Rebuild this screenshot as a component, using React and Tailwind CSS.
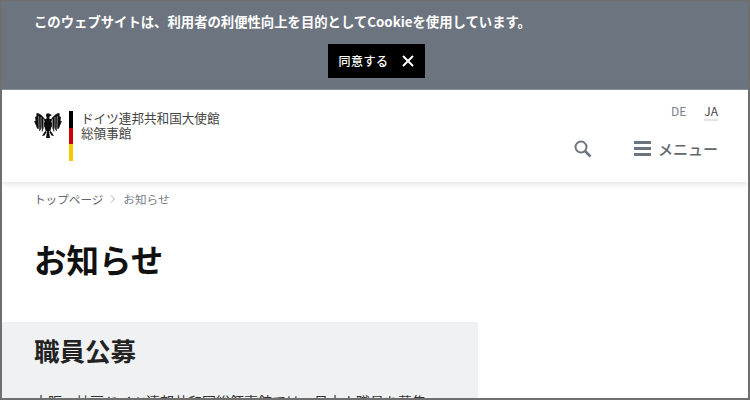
const jp = { fontFamily: '"Noto Sans CJK JP", "Noto Sans", sans-serif' };

function Eagle() {
  const feathersL = [
    "M11 9 C8 4 5 2.5 2.8 2.5 L3.4 15",
    "M10.5 10 C8 6 4 5 1.4 6 L3.4 17",
    "M10.5 12 C7 9 3 9 0.6 10.5 L4 18",
    "M10.5 13 L6 7 L5.6 20",
    "M11 14 L8.5 7 L8.2 20.5",
  ];
  return (
    <svg width="28" height="28" viewBox="0 0 28 28" fill="#0c0c0c">
      <circle cx="14" cy="4.2" r="2" />
      <path d="M15.3 2.8 L18 4 L15.4 5.4Z" />
      <path d="M12.8 5 H15.2 L15.6 8 H12.4Z" />
      <path d="M11 8 H17 L17.8 15 L16.2 20 H11.8 L10.2 15Z" />
      <g stroke="#0c0c0c" strokeWidth="0.7">
        {feathersL.map((d) => (
          <path key={d} d={d} />
        ))}
        <g transform="translate(28 0) scale(-1 1)">
          {feathersL.map((d) => (
            <path key={d} d={d} />
          ))}
        </g>
      </g>
      <path d="M4.6 5 L5 17 M7 6 L7.2 18 M9.4 8 L9.6 17 M23.4 5 L23 17 M21 6 L20.8 18 M18.6 8 L18.4 17" stroke="#fff" strokeWidth="0.5" fill="none" />
      <path d="M13 20 H15 L16 27 H12Z" />
      <path d="M11.5 19.5 L8 25 L10.5 24.5 L12.5 21Z" />
      <path d="M16.5 19.5 L20 25 L17.5 24.5 L15.5 21Z" />
    </svg>
  );
}

export default function App() {
  return (
    <div style={jp} className="w-[750px] h-[400px] overflow-hidden bg-white border-x-2 border-b-2 border-t border-[#6f6f6f] box-border">
      <div className="h-[89px] bg-[#6c757f] border-b border-[#8b929a] flex flex-col items-center">
        <p className="w-full pl-[32px] mt-[12px] text-[13.35px] leading-[18px] font-bold text-white whitespace-nowrap">このウェブサイトは、利用者の利便性向上を目的としてCookieを使用しています。</p>
        <div className="mt-[13px] pl-[2px]">
          <button style={jp} className="h-[34px] w-[97px] bg-black text-white text-[12px] font-medium flex items-center justify-center gap-[13px] tracking-[0.5px]">
            同意する
            <svg width="12" height="12" viewBox="0 0 12 12" stroke="#fff" strokeWidth="2" fill="none"><path d="M1 1 L11 11 M11 1 L1 11" /></svg>
          </button>
        </div>
      </div>

      <header className="h-[92px] flex justify-between pl-[32px] pr-[30px] shadow-[0_2px_6px_rgba(0,0,0,0.12)]">
        <div className="flex items-start pt-[21px]">
          <Eagle />
          <div className="ml-[7px] w-[4px] h-[50px] flex flex-col">
            <div className="flex-1 bg-black" />
            <div className="flex-1 bg-[#d00000]" />
            <div className="flex-1 bg-[#f5c800]" />
          </div>
          <div className="ml-[8px] -mt-[1px] text-[12.6px] leading-[15px] text-[#444] whitespace-nowrap">
            <div>ドイツ連邦共和国大使館</div>
            <div>総領事館</div>
          </div>
        </div>
        <div className="flex flex-col items-end pt-[13px]">
          <div className="flex gap-[18px] text-[12px] leading-[16px] text-[#7b828a]">
            <span>DE</span>
            <span className="text-[#444] border-b-2 border-[#e3e4e6] h-[18px]">JA</span>
          </div>
          <div className="flex items-center mt-[18px]">
            <svg width="18" height="18" viewBox="0 0 18 18" fill="none" stroke="#6c757f" strokeWidth="2"><circle cx="7" cy="7" r="5.5" /><path d="M11 11 L16.5 16.5" strokeWidth="2.6" /></svg>
            <div className="ml-[42px] w-[17px] flex flex-col gap-[3px] -mt-[2px]">
              <div className="h-[3px] bg-[#6c757f]" />
              <div className="h-[3px] bg-[#6c757f]" />
              <div className="h-[3px] bg-[#6c757f]" />
            </div>
            <span className="ml-[7px] text-[15px] leading-[20px] font-medium text-[#5f666e]">メニュー</span>
          </div>
        </div>
      </header>

      <nav className="pl-[32px] mt-[9px] h-[16px] flex items-center text-[11.6px] leading-[16px] text-[#5f666e]">
        <span>トップページ</span>
        <svg className="mx-[7px]" width="6" height="8" viewBox="0 0 6 8" fill="none" stroke="#a8adb3" strokeWidth="1"><path d="M1 0.5 L4.5 4 L1 7.5" /></svg>
        <span className="text-[#757c84]">お知らせ</span>
      </nav>

      <h1 className="pl-[32px] mt-[29px] text-[32.5px] leading-[46px] font-bold text-[#111]">お知らせ</h1>

      <section className="mt-[40px] w-[476px] h-[90px] bg-[#f0f1f3] pl-[32px] overflow-hidden">
        <h2 className="pt-[11px] text-[25.5px] leading-[34px] font-bold text-[#222]">職員公募</h2>
        <p className="mt-[23px] text-[14px] leading-[22px] text-[#333] whitespace-nowrap">大阪・神戸ドイツ連邦共和国総領事館では、日本人職員を募集</p>
      </section>
    </div>
  );
}
